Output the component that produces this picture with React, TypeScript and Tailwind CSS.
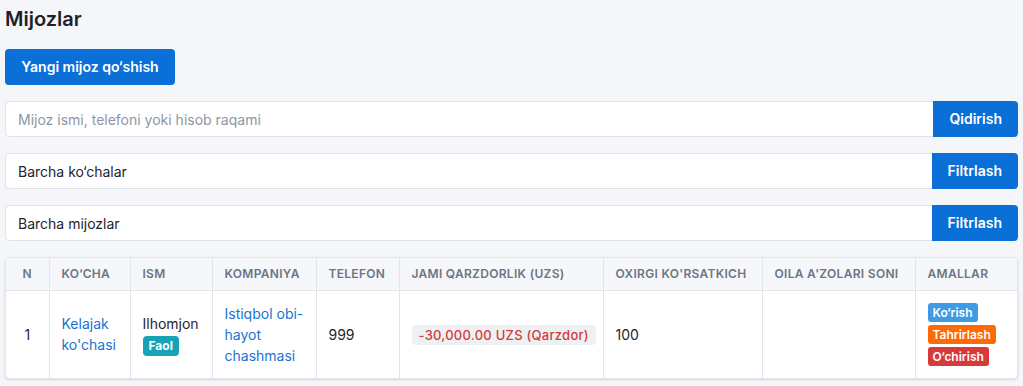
import { useState } from 'react';

// Mijozlar ro'yxati sahifasi — qidiruv, filtrlar va jadval
const headers = [
  { label: 'N', w: 'w-[43px]', center: true },
  { label: 'Ko‘cha', w: 'w-[81px]' },
  { label: 'Ism', w: 'w-[82px]' },
  { label: 'Kompaniya', w: 'w-[104px]' },
  { label: 'Telefon', w: 'w-[83px]' },
  { label: 'Jami qarzdorlik (UZS)', w: 'w-[204px]' },
  { label: "Oxirgi ko'rsatkich", w: 'w-[159px]' },
  { label: "Oila a'zolari soni", w: 'w-[153px]' },
  { label: 'Amallar', w: 'w-[104px]' },
];

function SearchRow({ value, placeholder, button }: { value?: string; placeholder?: string; button: string }) {
  const [text, setText] = useState(value ?? '');
  return (
    <div className="flex h-9 w-full">
      <input
        value={text}
        onChange={e => setText(e.target.value)}
        placeholder={placeholder}
        className="flex-1 min-w-0 h-full bg-white border border-[#dfe3e9] border-r-0 rounded-l-[4px] px-3 text-sm text-[#1e2430] placeholder:text-[#8d96a4] outline-none"
      />
      <button className="h-full px-4 bg-[#0a6fd6] text-white text-sm font-semibold rounded-r-[4px]">
        {button}
      </button>
    </div>
  );
}

export default function App() {
  return (
    <div className="min-h-screen bg-[#f5f6fa] px-[5px] pt-[6px] font-['Inter',sans-serif] text-[#1e2430]">
      <h1 className="text-xl font-semibold text-[#1d2129] leading-[26px]">Mijozlar</h1>

      <button className="mt-[17px] h-9 w-[170px] rounded-[4px] bg-[#0a6fd6] text-white text-sm font-semibold">
        Yangi mijoz qo‘shish
      </button>

      <div className="mt-4 flex flex-col gap-4">
        <SearchRow placeholder="Mijoz ismi, telefoni yoki hisob raqami" button="Qidirish" />
        <SearchRow value="Barcha ko‘chalar" button="Filtrlash" />
        <SearchRow value="Barcha mijozlar" button="Filtrlash" />
      </div>

      <div className="mt-4 bg-white border border-[#e2e5ea] rounded-[4px] shadow-sm overflow-hidden">
        <table className="w-full table-fixed border-collapse">
          <thead>
            <tr className="bg-[#f6f7fa]">
              {headers.map((h, i) => (
                <th
                  key={h.label}
                  className={`${h.w} h-8 px-3 text-xs font-semibold uppercase tracking-wide text-[#6b7584] whitespace-nowrap border-b border-[#e2e5ea] ${
                    i > 0 ? 'border-l text-left' : 'text-center'
                  }`}
                >
                  {h.label}
                </th>
              ))}
            </tr>
          </thead>
          <tbody className="text-sm leading-[21px]">
            <tr>
              <td className="px-3 py-3 text-center">1</td>
              <td className="px-3 py-3 border-l border-[#e2e5ea] text-[#1a73d1]">Kelajak ko'chasi</td>
              <td className="px-3 py-3 border-l border-[#e2e5ea]">
                <div>Ilhomjon</div>
                <span className="inline-block rounded-[4px] bg-[#17a2b8] px-[6px] text-xs font-bold leading-5 text-white">
                  Faol
                </span>
              </td>
              <td className="px-3 py-3 border-l border-[#e2e5ea] text-[#1a73d1]">Istiqbol obi-hayot chashmasi</td>
              <td className="px-3 py-3 border-l border-[#e2e5ea]">999</td>
              <td className="px-3 py-3 border-l border-[#e2e5ea]">
                <span className="inline-block whitespace-nowrap rounded-[4px] bg-[#eef1f4] px-[7px] text-[13px] font-medium leading-5 tracking-[0.02em] text-[#d63a3a]">
                  -30,000.00 UZS (Qarzdor)
                </span>
              </td>
              <td className="px-3 py-3 border-l border-[#e2e5ea]">100</td>
              <td className="px-3 py-3 border-l border-[#e2e5ea]"></td>
              <td className="px-3 py-3 border-l border-[#e2e5ea]">
                <div className="flex flex-col items-start gap-[3px]">
                  <button className="rounded-[3px] bg-[#3f9be6] px-[5px] text-xs font-semibold leading-[19px] text-white">Ko‘rish</button>
                  <button className="rounded-[3px] bg-[#fd6a06] px-[5px] text-xs font-semibold leading-[19px] text-white">Tahrirlash</button>
                  <button className="rounded-[3px] bg-[#d63a3a] px-[5px] text-xs font-semibold leading-[19px] text-white">O‘chirish</button>
                </div>
              </td>
            </tr>
          </tbody>
        </table>
      </div>
    </div>
  );
}
